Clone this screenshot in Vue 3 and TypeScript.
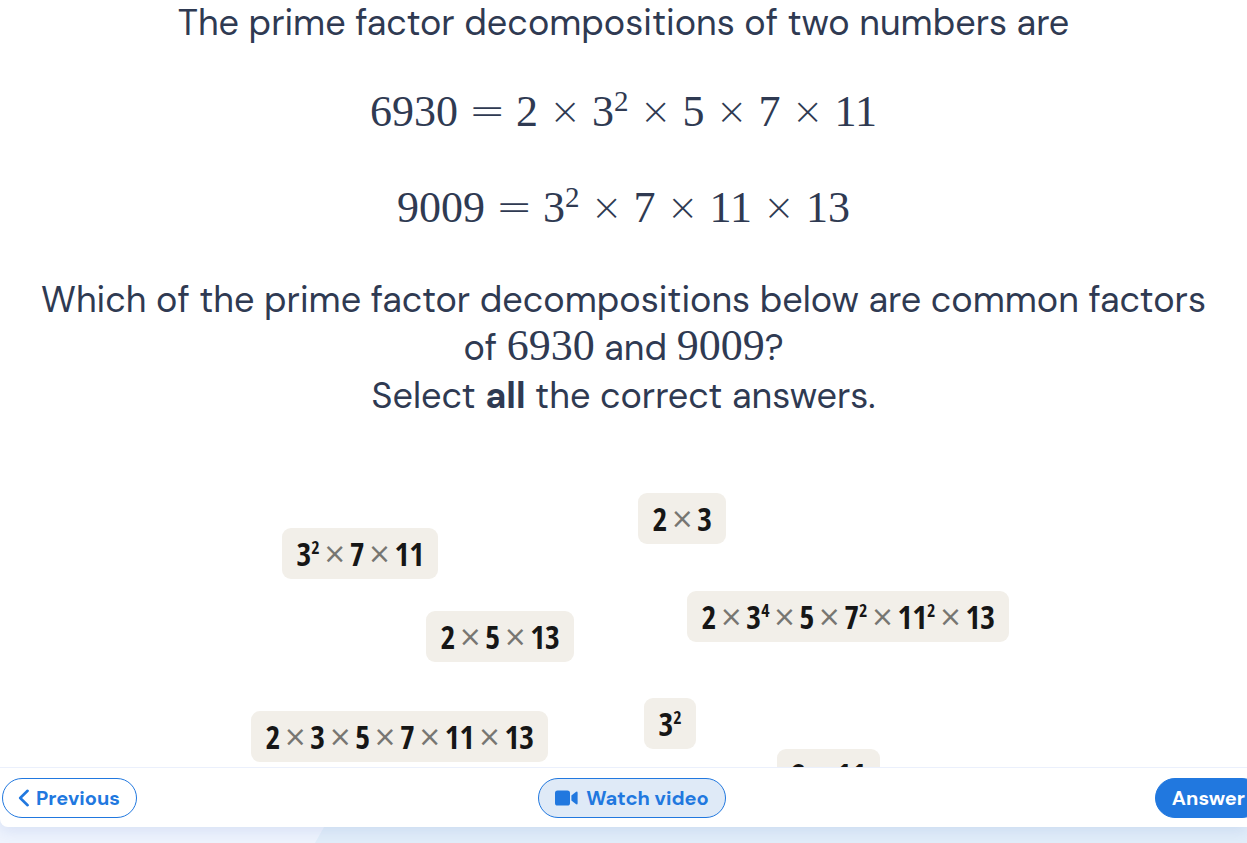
<script setup lang="ts">
import { ref } from 'vue'

interface Token {
  kind: 'num' | 'op' | 'sup'
  text: string
}

interface Tile {
  id: number
  x: number
  y: number
  tokens: Token[]
}

// "3^2 x 7" -> number, exponent, operator, number
function parse(expression: string): Token[] {
  return expression.split(' ').flatMap((part): Token[] => {
    if (part === 'x') return [{ kind: 'op', text: '×' }]
    if (part === '=') return [{ kind: 'op', text: '=' }]
    const [base, exponent] = part.split('^')
    const tokens: Token[] = [{ kind: 'num', text: base }]
    if (exponent) tokens.push({ kind: 'sup', text: exponent })
    return tokens
  })
}

const equations = ['6930 = 2 x 3^2 x 5 x 7 x 11', '9009 = 3^2 x 7 x 11 x 13'].map(parse)

const tiles: Tile[] = [
  { id: 1, x: 404, y: 23, tokens: parse('2 x 3') },
  { id: 2, x: 48, y: 58, tokens: parse('3^2 x 7 x 11') },
  { id: 3, x: 453, y: 121, tokens: parse('2 x 3^4 x 5 x 7^2 x 11^2 x 13') },
  { id: 4, x: 192, y: 141, tokens: parse('2 x 5 x 13') },
  { id: 5, x: 410, y: 228, tokens: parse('3^2') },
  { id: 6, x: 17, y: 241, tokens: parse('2 x 3 x 5 x 7 x 11 x 13') },
  { id: 7, x: 543, y: 279, tokens: parse('2 x 11') },
]

const selected = ref<number[]>([])

function toggle(id: number) {
  selected.value = selected.value.includes(id)
    ? selected.value.filter((item) => item !== id)
    : [...selected.value, id]
}
</script>

<template>
  <div class="page">
    <div class="card">
      <main class="question">
        <p class="text intro">The prime factor decompositions of two numbers are</p>
        <div class="equations">
          <p v-for="(equation, i) in equations" :key="i" class="equation">
            <template v-for="(token, j) in equation" :key="j">
              <sup v-if="token.kind === 'sup'">{{ token.text }}</sup>
              <span v-else :class="[token.kind, { equals: token.text === '=' }]">{{ token.text }}</span>
            </template>
          </p>
        </div>
        <p class="text">
          Which of the prime factor decompositions below are common factors<br />
          of <span class="inline-num">6930</span> and <span class="inline-num">9009</span>?<br />
          Select <strong>all</strong> the correct answers.
        </p>
        <div class="board">
          <button
            v-for="tile in tiles"
            :key="tile.id"
            type="button"
            class="tile"
            :class="{ selected: selected.includes(tile.id) }"
            :aria-pressed="selected.includes(tile.id)"
            :style="{ left: tile.x + 'px', top: tile.y + 'px' }"
            @click="toggle(tile.id)"
          >
            <template v-for="(token, j) in tile.tokens" :key="j">
              <sup v-if="token.kind === 'sup'">{{ token.text }}</sup>
              <span v-else :class="token.kind">{{ token.text }}</span>
            </template>
          </button>
        </div>
      </main>
      <footer class="bar">
        <div class="actions">
          <button type="button" class="pill previous">
            <svg width="12" height="18" viewBox="0 0 12 18" aria-hidden="true">
              <path d="M9.6 1.8 2.2 9l7.4 7.2" fill="none" stroke="currentColor" stroke-width="2.6" stroke-linecap="round" stroke-linejoin="round" />
            </svg>
            Previous
          </button>
          <button type="button" class="pill watch">
            <svg width="23" height="16" viewBox="0 0 23 16" aria-hidden="true">
              <rect x="0" y="0.5" width="15" height="15" rx="2.6" fill="currentColor" />
              <path d="M16.4 5.4 20.8 1.9Q22.6 0.9 22.6 2.8V13.2Q22.6 15.1 20.8 14.1L16.4 10.6Z" fill="currentColor" />
            </svg>
            Watch video
          </button>
          <button type="button" class="pill answer">Answer</button>
        </div>
      </footer>
    </div>
    <svg class="slant" height="16" aria-hidden="true">
      <path d="M9 0H3000V16H0Z" fill="#e1edf9" />
    </svg>
  </div>
</template>

<style>
body {
  overflow: hidden;
}
</style>

<style scoped>
.page {
  height: 100vh;
  display: flex;
  flex-direction: column;
  background: #eef3fd;
  overflow: hidden;
  font-family: "DM Sans", Inter, sans-serif;
  color: #2f3a52;
}

.card {
  flex: 1;
  min-height: 0;
  display: flex;
  flex-direction: column;
  background: #fff;
  border-radius: 0 0 0 8px;
  box-shadow: 0 4px 14px rgba(60, 100, 190, 0.12);
  position: relative;
}

.question {
  flex: 1;
  min-height: 0;
  overflow: hidden;
  text-align: center;
}

.text {
  margin: 0;
  font-size: 36px;
  line-height: 48px;
}

.intro {
  line-height: 46px;
}

.equations {
  display: flex;
  flex-direction: column;
  gap: 48px;
  padding: 42px 0 44px;
}

.equation {
  margin: 0;
  display: flex;
  justify-content: center;
  font-family: "Liberation Serif", serif;
  font-size: 44px;
  line-height: 48px;
}

.equation .op {
  width: 54px;
  font-family: "DejaVu Sans Light", "DejaVu Sans", sans-serif;
  font-weight: 200;
  font-size: 38px;
  line-height: 46px;
}

.equation .equals {
  width: 58px;
  font-size: 44px;
}

.equation sup {
  font-size: 29px;
  line-height: 26px;
}

.inline-num {
  font-family: "Liberation Serif", serif;
  font-size: 44px;
  line-height: 1px;
}

.board {
  position: relative;
  width: 780px;
  max-width: 100%;
  height: 360px;
  margin: 50px auto 0;
}

.tile {
  position: absolute;
  display: flex;
  height: 51px;
  padding: 0 14px 0 15px;
  border: 0;
  border-radius: 9px;
  background: #f2efe9;
  color: #161616;
  font-family: "Liberation Sans Narrow", "Open Sans Condensed", "Roboto Condensed", "Noto Sans", sans-serif;
  font-size: 32px;
  font-weight: 600;
  line-height: 51px;
  white-space: nowrap;
  cursor: pointer;
}

.tile.selected {
  box-shadow: inset 0 0 0 2px #2178df;
}

.tile .op {
  width: 30px;
  color: #777672;
  font-family: "DejaVu Sans", sans-serif;
  font-size: 28px;
  font-weight: 400;
}

.tile sup {
  font-size: 18px;
  line-height: 38px;
}

.bar {
  height: 59px;
  border-top: 1px solid #ebf0fc;
  overflow: hidden;
}

.actions {
  display: grid;
  grid-template-columns: 1fr auto 1fr;
  align-items: center;
  height: 60px;
  margin: 0 -15px 0 2px;
}

.pill {
  display: flex;
  align-items: center;
  gap: 8px;
  height: 40px;
  padding: 0 16px;
  border: 1px solid #2178df;
  border-radius: 20px;
  background: #fff;
  color: #2178df;
  font-family: inherit;
  font-size: 20px;
  font-weight: 700;
  line-height: 24px;
  white-space: nowrap;
  cursor: pointer;
}

.previous {
  justify-self: start;
  gap: 6px;
  padding: 0 16px 0 15px;
}

.watch {
  background: #dfeaf7;
}

.answer {
  justify-self: end;
  background: #2178df;
  color: #fff;
}

.slant {
  display: block;
  width: calc(100% - 315px);
  margin-left: 315px;
}
</style>
